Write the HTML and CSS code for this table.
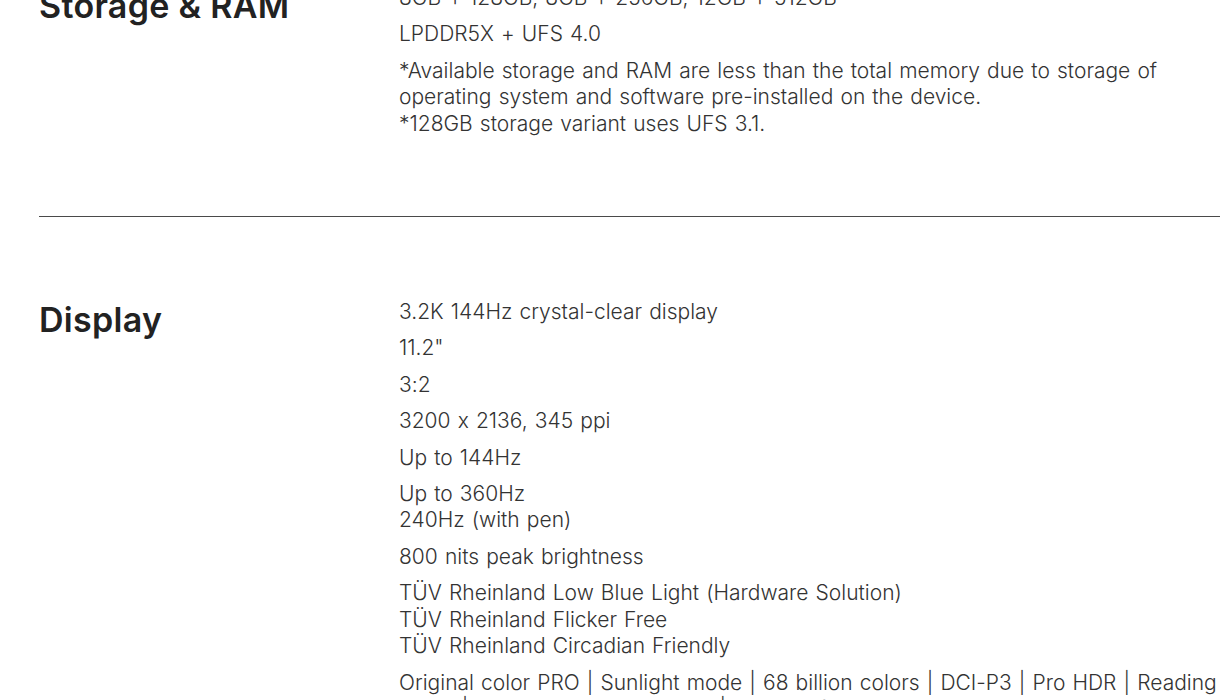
FILE: index.html
```html
<!DOCTYPE html>
<html lang="en">
<head>
<meta charset="utf-8">
<title>Specs</title>
<link rel="stylesheet" href="styles.css">
</head>
<body>
<main class="specs">
  <section class="spec spec-first">
    <h2 class="spec-title">Storage &amp; RAM</h2>
    <div class="spec-body">
      <p>8GB + 128GB, 8GB + 256GB, 12GB + 512GB</p>
      <p>LPDDR5X + UFS 4.0</p>
      <p>*Available storage and RAM are less than the total memory due to storage of operating system and software pre-installed on the device.<br>*128GB storage variant uses UFS 3.1.</p>
    </div>
  </section>
  <hr class="divider">
  <section class="spec">
    <h2 class="spec-title">Display</h2>
    <div class="spec-body">
      <p>3.2K 144Hz crystal-clear display</p>
      <p>11.2"</p>
      <p>3:2</p>
      <p>3200 x 2136, 345 ppi</p>
      <p>Up to 144Hz</p>
      <p>Up to 360Hz<br>240Hz (with pen)</p>
      <p>800 nits peak brightness</p>
      <p>TÜV Rheinland Low Blue Light (Hardware Solution)<br>TÜV Rheinland Flicker Free<br>TÜV Rheinland Circadian Friendly</p>
      <p>Original color PRO | Sunlight mode | 68 billion colors | DCI-P3 | Pro HDR | Reading mode | Paper-like display mode | Eye comfort mode</p>
    </div>
  </section>
</main>
</body>
</html>
```

FILE: styles.css
```css
html, body {
  margin: 0;
  padding: 0;
  background: #ffffff;
  overflow: hidden;
}

body {
  font-family: Inter, "Noto Sans", sans-serif;
  font-feature-settings: "calt" 0;
  color: #333333;
}

.specs {
  width: 1200px;
  margin-left: 39px;
}

.spec {
  display: flex;
  padding: 82px 0 69px;
}

.spec-first {
  margin-top: -97px;
}

.spec-title {
  flex: 0 0 360px;
  margin: 0;
  font-size: 34px;
  line-height: 42px;
  font-weight: 600;
  letter-spacing: 0.3px;
  color: #222222;
}

.spec-body {
  flex: 0 0 820px;
}

.spec-body p {
  margin: 0 0 10px;
  font-size: 21px;
  line-height: 26.4px;
  font-weight: 300;
  word-spacing: 1.2px;
}

.divider {
  margin: 0;
  border: 0;
  height: 1px;
  background: #4a4a4a;
}
```
